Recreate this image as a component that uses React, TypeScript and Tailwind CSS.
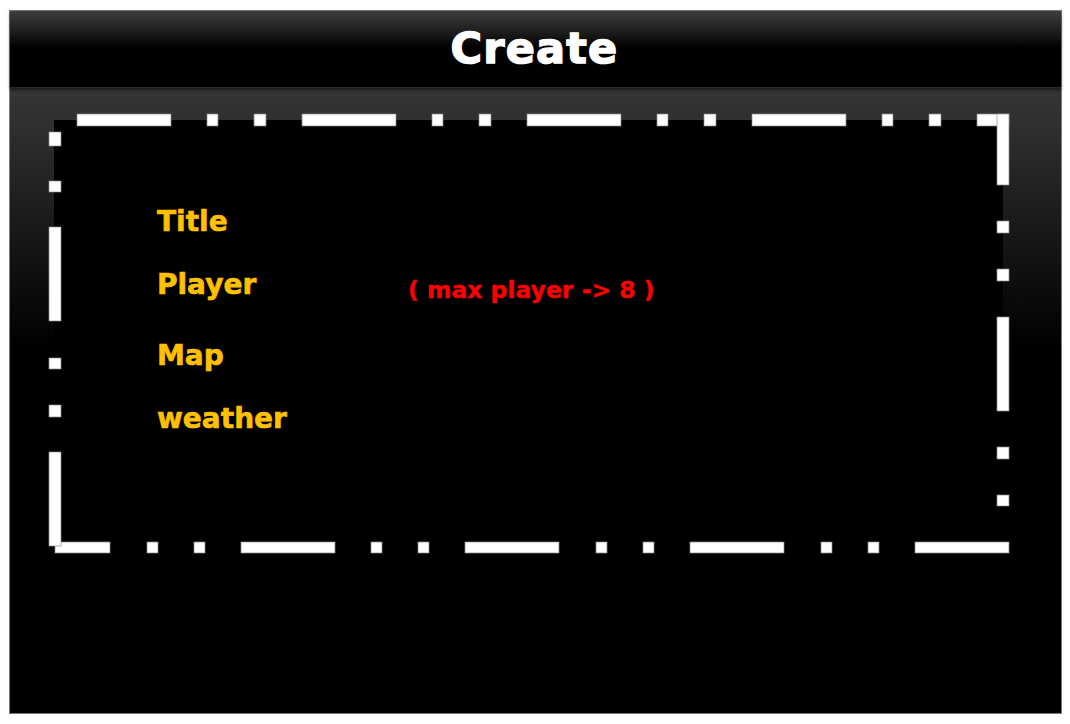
import React from "react";

type Seg = [number, number];

const ORIGIN_X = 44;
const ORIGIN_Y = 111;

const top: Seg[] = [
  [77, 171], [207, 218], [254, 266], [302, 396], [432, 443], [479, 491],
  [527, 621], [657, 668], [704, 716], [752, 846], [882, 893], [929, 941], [977, 1009],
];
const right: Seg[] = [[115, 186], [222, 234], [270, 282], [318, 412], [448, 460], [496, 507]];
const bottom: Seg[] = [
  [915, 1009], [868, 879], [821, 832], [690, 784], [643, 654], [596, 607],
  [465, 559], [418, 429], [371, 382], [241, 335], [194, 205], [147, 158], [55, 110],
];
const left: Seg[] = [[453, 547], [406, 418], [359, 370], [228, 322], [182, 193], [133, 147]];

function rects(): [number, number, number, number][] {
  const r: [number, number, number, number][] = [];
  top.forEach(([a, b]) => r.push([a, 115, b, 127]));
  right.forEach(([a, b]) => r.push([997, a, 1009, b]));
  bottom.forEach(([a, b]) => r.push([a, 543, b, 554]));
  left.forEach(([a, b]) => r.push([49, a, 61, b]));
  return r;
}

function DashBorder() {
  return (
    <svg
      className="absolute left-[-10px] top-[-10px]"
      width={975}
      height={455}
      viewBox="0 0 975 455"
    >
      {rects().map(([x1, y1, x2, y2], i) => (
        <rect
          key={i}
          x={x1 - ORIGIN_X}
          y={y1 - ORIGIN_Y}
          width={x2 - x1}
          height={y2 - y1}
          fill="#ffffff"
          stroke="#8a8a8a"
          strokeWidth={0.7}
        />
      ))}
    </svg>
  );
}

export default function App() {
  return (
    <div className="min-h-[724px] bg-white pt-[10px] pl-[9px]">
      <div className="w-[1053px] h-[704px] border border-[#7a7a7a] bg-black flex flex-col">
        <header className="relative z-10 h-[77px] shrink-0 flex justify-center pt-[16px] bg-[linear-gradient(to_bottom,#3e3e3e_0%,#1a1a1a_30%,#000_48%,#000_100%)] shadow-[0_2px_3px_rgba(0,0,0,0.55)] border-b border-[#2a2a2a]">
          <h1 className="font-['DejaVu_Sans',sans-serif] font-bold text-[43px] leading-[43px] text-white tracking-[1.2px] [-webkit-text-stroke:1.5px_#ffffff] pr-[2px]">
            Create
          </h1>
        </header>
        <main className="flex-1 pt-[32px] pl-[44px] bg-[linear-gradient(to_bottom,#363636_0px,#2a2a2a_60px,#000_260px,#000_100%)]">
          <div className="relative w-[949px] h-[427px] bg-black">
            <DashBorder />
            <div className="relative pl-[103px] pt-[88px] font-['DejaVu_Sans',sans-serif] font-bold text-[28px] leading-[28px] text-[#FFC000] [-webkit-text-stroke:0.6px_#FFC000]">
              <div>Title</div>
              <div className="mt-[35px] flex items-baseline">
                <span className="w-[251px] shrink-0">Player</span>
                <span className="text-[23.5px] text-[#FF0000] [-webkit-text-stroke:0.4px_#FF0000] translate-y-[4px] whitespace-pre">( max player -&gt; 8 )</span>
              </div>
              <div className="mt-[42px]">Map</div>
              <div className="mt-[35px]">weather</div>
            </div>
          </div>
        </main>
      </div>
    </div>
  );
}
